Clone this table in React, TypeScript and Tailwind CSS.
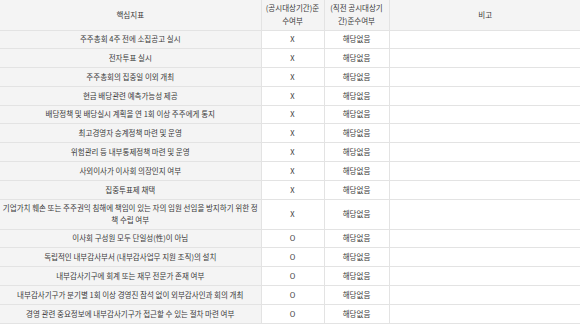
const rows: { label: string; now: string; prev: string; tall?: boolean }[] = [
  { label: "주주총회 4주 전에 소집공고 실시", now: "X", prev: "해당없음" },
  { label: "전자투표 실시", now: "X", prev: "해당없음" },
  { label: "주주총회의 집중일 이외 개최", now: "X", prev: "해당없음" },
  { label: "현금 배당관련 예측가능성 제공", now: "X", prev: "해당없음" },
  { label: "배당정책 및 배당실시 계획을 연 1회 이상 주주에게 통지", now: "X", prev: "해당없음" },
  { label: "최고경영자 승계정책 마련 및 운영", now: "X", prev: "해당없음" },
  { label: "위험관리 등 내부통제정책 마련 및 운영", now: "X", prev: "해당없음" },
  { label: "사외이사가 이사회 의장인지 여부", now: "X", prev: "해당없음" },
  { label: "집중투표제 채택", now: "X", prev: "해당없음" },
  {
    label: "기업가치 훼손 또는 주주권익 침해에 책임이 있는 자의 임원 선임을 방지하기 위한 정책 수립 여부",
    now: "X",
    prev: "해당없음",
    tall: true,
  },
  { label: "이사회 구성원 모두 단일성(性)이 아님", now: "O", prev: "해당없음" },
  { label: "독립적인 내부감사부서 (내부감사업무 지원 조직)의 설치", now: "O", prev: "해당없음" },
  { label: "내부감사기구에 회계 또는 재무 전문가 존재 여부", now: "O", prev: "해당없음" },
  { label: "내부감사기구가 분기별 1회 이상 경영진 참석 없이 외부감사인과 회의 개최", now: "O", prev: "해당없음" },
  { label: "경영 관련 중요정보에 내부감사기구가 접근할 수 있는 절차 마련 여부", now: "O", prev: "해당없음" },
];

export default function App() {
  return (
    <div className="w-[580px] h-[325px] overflow-hidden bg-white font-['Noto_Sans_CJK_KR','Noto_Sans',sans-serif] text-[7.5px] leading-[12.5px] text-[#3a3a3a]">
      <table className="w-[581px] table-fixed border-collapse">
        <colgroup>
          <col className="w-[261px]" />
          <col className="w-[63px]" />
          <col className="w-[65px]" />
          <col />
        </colgroup>
        <thead>
          <tr className="h-[30px] bg-[#f4f4f4]">
            <th className="border-b border-r border-[#e3e3e3] font-normal text-center">핵심지표</th>
            <th className="border-b border-r border-[#e3e3e3] font-normal text-center px-1">(공시대상기간)준수여부</th>
            <th className="border-b border-r border-[#e3e3e3] font-normal text-center px-1">(직전 공시대상기간)준수여부</th>
            <th className="border-b border-[#e3e3e3] font-normal text-center">비고</th>
          </tr>
        </thead>
        <tbody>
          {rows.map((r) => (
            <tr key={r.label} className={r.tall ? "h-[30px]" : "h-[18.8px]"}>
              <td className="border-b border-r border-[#e3e3e3] bg-[#f4f4f4] text-center px-[2px]">{r.label}</td>
              <td className="border-b border-r border-[#e3e3e3] text-center">{r.now}</td>
              <td className="border-b border-r border-[#e3e3e3] text-center">{r.prev}</td>
              <td className="border-b border-[#e3e3e3]"></td>
            </tr>
          ))}
        </tbody>
      </table>
    </div>
  );
}
